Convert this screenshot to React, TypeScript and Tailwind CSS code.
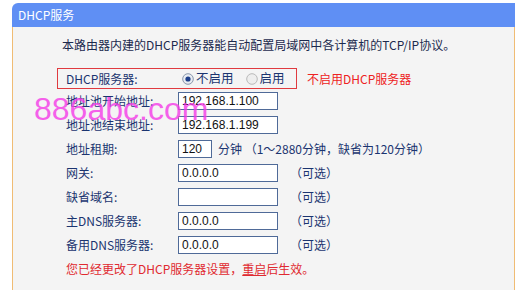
import React from "react";

const F = { fontFamily: '"Noto Sans CJK SC", "Noto Sans", sans-serif' };

function Radio({ checked }: { checked: boolean }) {
  return (
    <svg width="12" height="12" viewBox="0 0 12 12" className="shrink-0">
      <circle cx="6" cy="6" r="5.3" fill={checked ? "#e8ecf2" : "#eeeeee"} stroke={checked ? "#8a97ab" : "#b9b9b9"} strokeWidth="1" />
      {checked && <circle cx="6" cy="6" r="2.6" fill="#1e3f8a" />}
    </svg>
  );
}

function Input({ value, w = "w-[100px]" }: { value: string; w?: string }) {
  return (
    <div className={`${w} h-[18px] bg-white border border-[#4f6a98] flex items-center pl-[3px] text-[12px] text-[#111] leading-none`} style={{ fontFamily: '"Liberation Sans", Arial, sans-serif' }}>
      {value}
    </div>
  );
}

function Row({ label, children }: { label: string; children: React.ReactNode }) {
  return (
    <div className="h-[24px] flex items-center pl-[9px]">
      <div className="w-[112px] shrink-0 text-[12px] text-[#1b3470]">{label}</div>
      {children}
    </div>
  );
}

const Opt = () => <span className="ml-[12px] text-[12px] text-[#1b3470]">（可选）</span>;

export default function App() {
  return (
    <div className="relative w-[526px] h-[290px] bg-white overflow-hidden pt-[3px] pl-[12px]" style={F}>
      <div className="w-[503px]">
        <div className="h-[24px] bg-[#5f8ff4] rounded-tl-[6px] flex items-center pl-[6px] text-white text-[12px]">DHCP服务</div>
        <div className="h-[270px] bg-[#f4f4f4] border-l border-r border-[#f0bc74] pl-[44px]">
          <div className="pt-[10px] h-[41px] leading-[16px] pl-[5px] text-[12px] text-[#1c2a4e]">
            本路由器内建的DHCP服务器能自动配置局域网中各计算机的TCP/IP协议。
          </div>
          <div className="flex items-center">
            <div className="w-[240px] h-[21px] border border-[#e03a3f] flex items-center pl-[8px]">
              <div className="w-[116px] text-[12px] text-[#1b3470]">DHCP服务器:</div>
              <Radio checked />
              <span className="ml-[2px] text-[12.5px] text-[#1b3470]">不启用</span>
              <span className="ml-[12px]"><Radio checked={false} /></span>
              <span className="ml-[2px] text-[12.5px] text-[#1b3470]">启用</span>
            </div>
            <span className="ml-[10px] text-[12px] text-[#ee2222]">不启用DHCP服务器</span>
          </div>
          <Row label="地址池开始地址:"><Input value="192.168.1.100" /></Row>
          <Row label="地址池结束地址:"><Input value="192.168.1.199" /></Row>
          <Row label="地址租期:">
            <Input value="120" w="w-[34px]" />
            <span className="ml-[6px] text-[12px] text-[#1b3470]">分钟 （1～2880分钟，缺省为120分钟）</span>
          </Row>
          <Row label="网关:"><Input value="0.0.0.0" /><Opt /></Row>
          <Row label="缺省域名:"><Input value="" /><Opt /></Row>
          <Row label="主DNS服务器:"><Input value="0.0.0.0" /><Opt /></Row>
          <Row label="备用DNS服务器:"><Input value="0.0.0.0" /><Opt /></Row>
          <div className="h-[24px] flex items-center pl-[9px] text-[12px] text-[#e02a30]">
            您已经更改了DHCP服务器设置，<span className="underline">重启</span>后生效。
          </div>
        </div>
      </div>
      <div
        className="absolute left-[34px] top-[93px] text-[32px] leading-[32px] text-[#f53ce8] opacity-80 pointer-events-none"
        style={{ fontFamily: '"Liberation Sans", Arial, sans-serif' }}
      >
        886abc.com
      </div>
    </div>
  );
}
